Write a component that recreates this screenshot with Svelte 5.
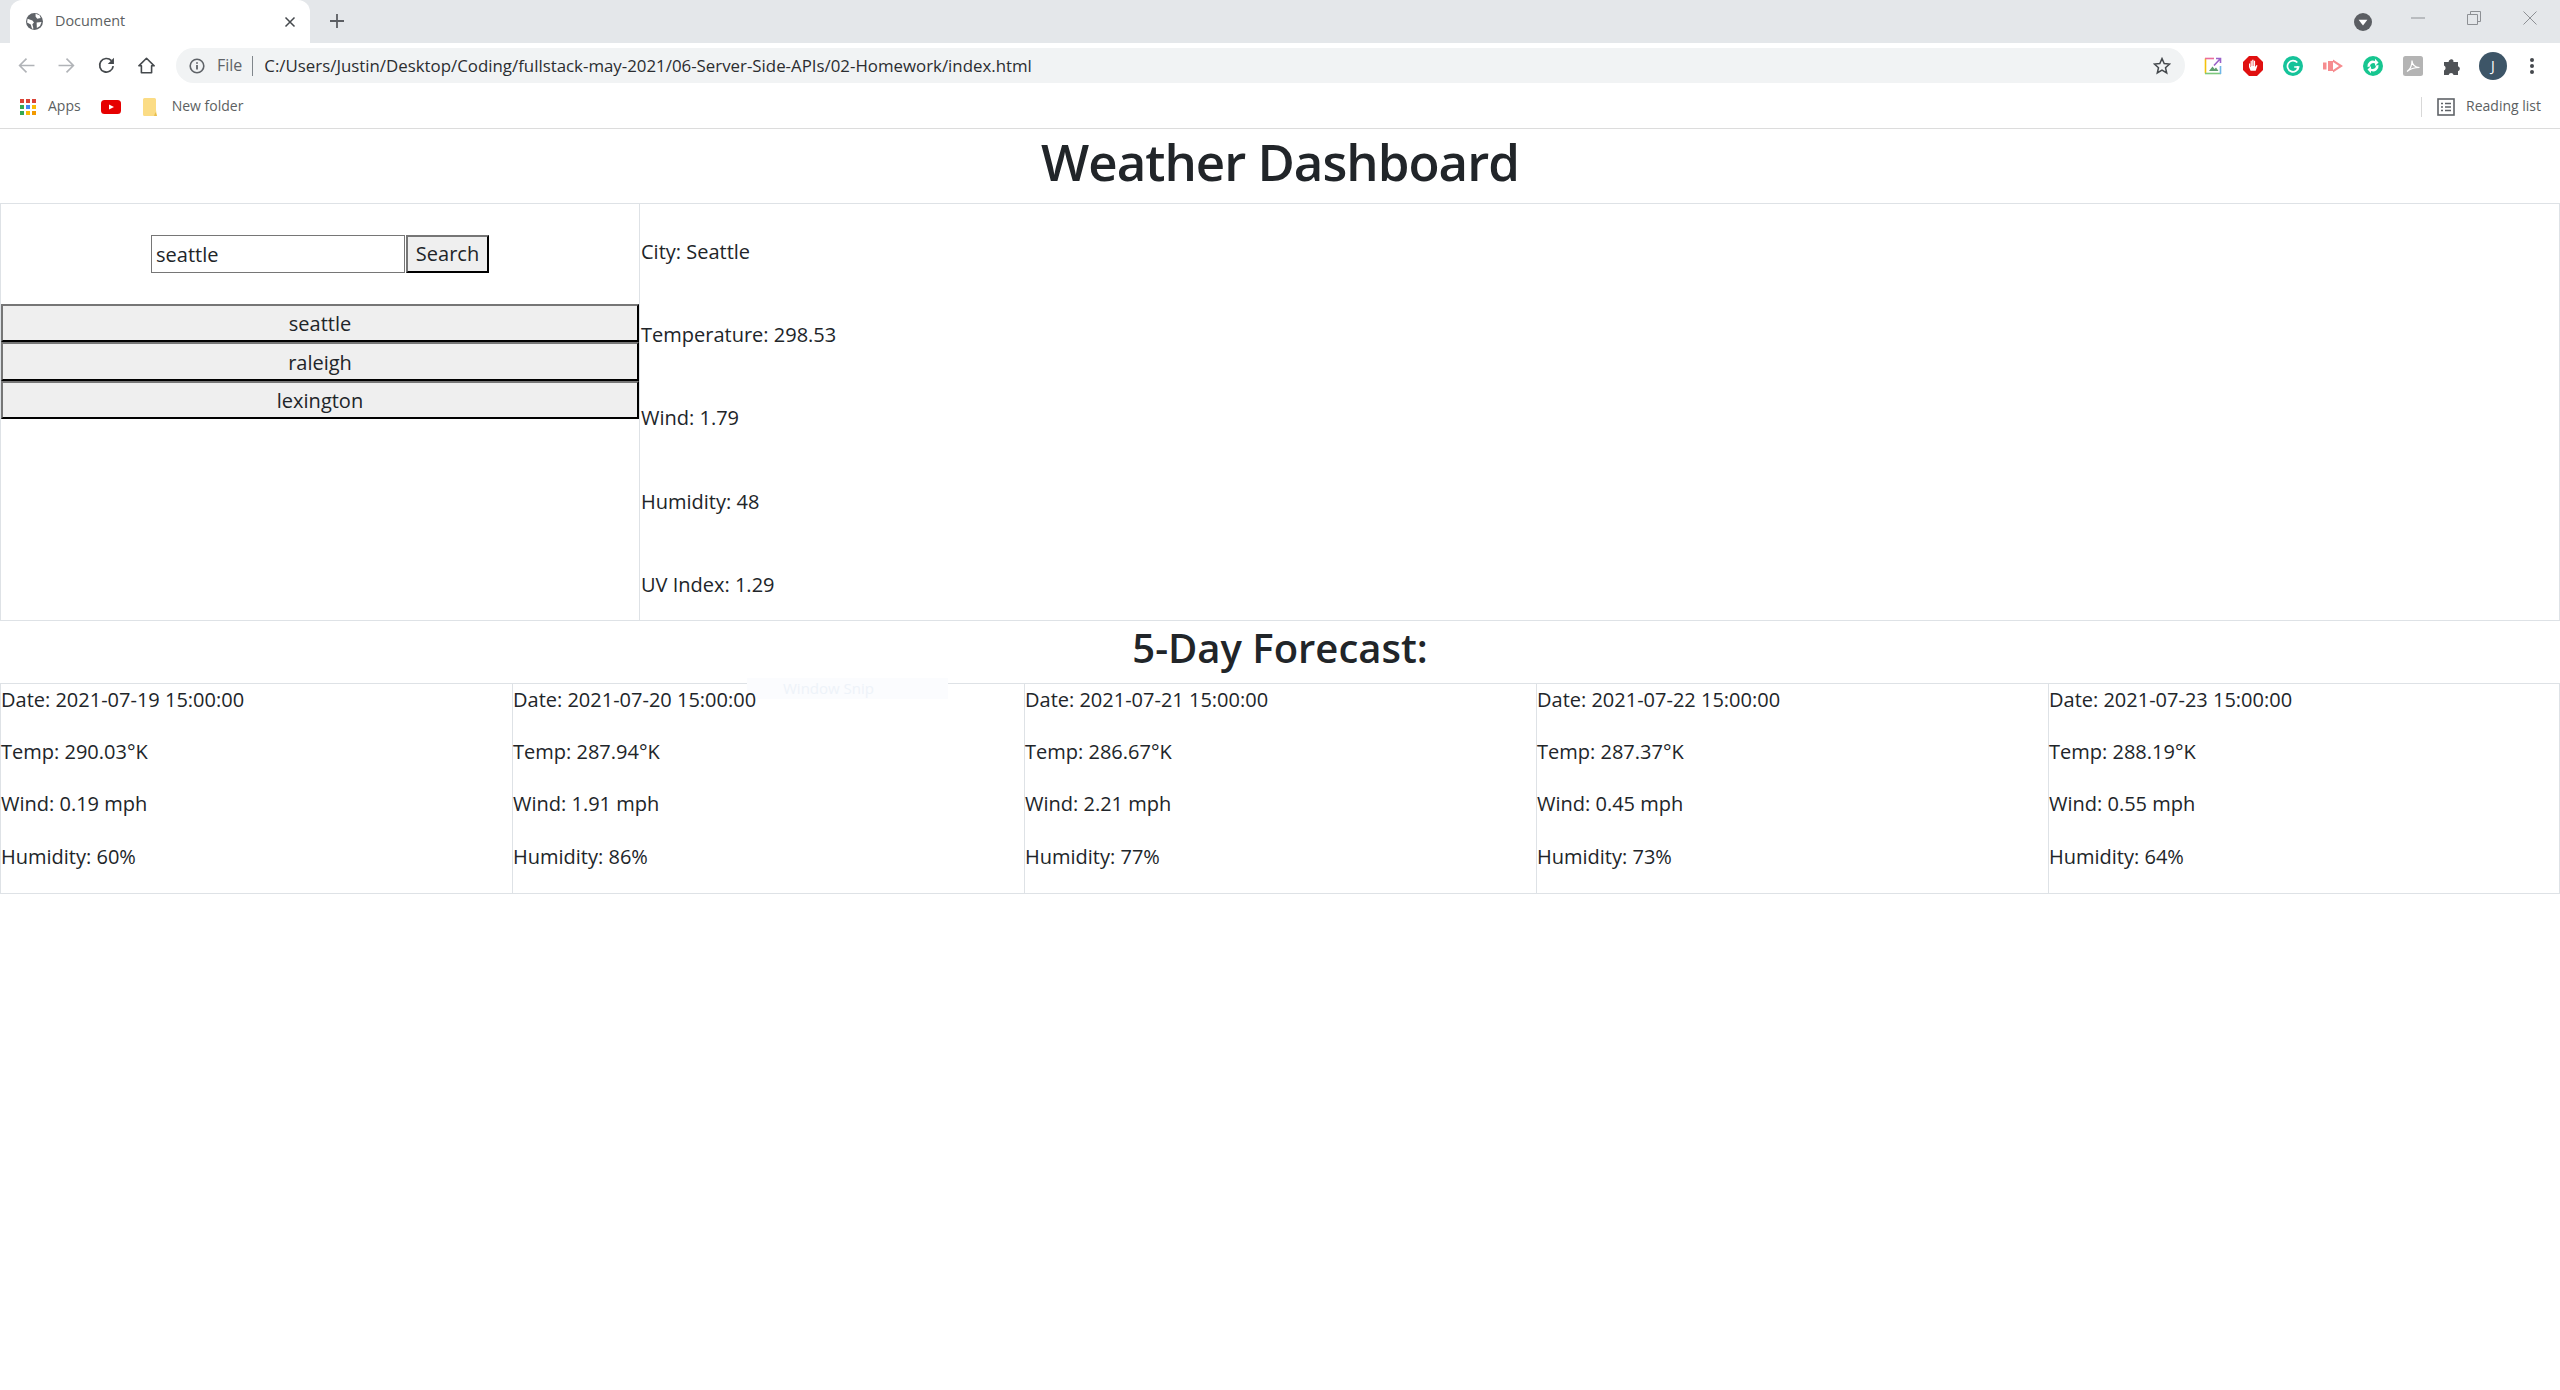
<script>
  const history = ['seattle', 'raleigh', 'lexington'];
  const current = ['City: Seattle', 'Temperature: 298.53', 'Wind: 1.79', 'Humidity: 48', 'UV Index: 1.29'];
  const forecast = [
    { date: '2021-07-19 15:00:00', temp: '290.03', wind: '0.19', humidity: 60 },
    { date: '2021-07-20 15:00:00', temp: '287.94', wind: '1.91', humidity: 86 },
    { date: '2021-07-21 15:00:00', temp: '286.67', wind: '2.21', humidity: 77 },
    { date: '2021-07-22 15:00:00', temp: '287.37', wind: '0.45', humidity: 73 },
    { date: '2021-07-23 15:00:00', temp: '288.19', wind: '0.55', humidity: 64 }
  ];
  const appColors = ['#db4437', '#db4437', '#db4437', '#34a853', '#4285f4', '#fbbc05', '#34a853', '#fbbc05', '#f29900'];
</script>

<div class="browser">
  <div class="tabstrip">
    <div class="tab">
      <svg class="favicon" viewBox="0 0 16 16"><circle cx="8" cy="8" r="8" fill="#5f6368"/><path d="M1.5 5.5L6 7l1.5 2-1.5 1.5 1 4-1.3.4-1.2-4L1 9zM9 .8l3.8 1.4 1 2.4-3.2.8-1.6-2.2zM10 9l4.6-.6-1.4 3.8-3 2z" fill="#fff"/></svg>
      <span class="tab-title">Document</span>
      <svg class="tab-close" viewBox="0 0 12 12"><path d="M1.5 1.5l9 9M10.5 1.5l-9 9" stroke="#45494d" stroke-width="1.5"/></svg>
    </div>
    <svg class="new-tab" viewBox="0 0 14 14"><path d="M7 0v14M0 7h14" stroke="#5b5e63" stroke-width="1.8"/></svg>
    <div class="spacer"></div>
    <div class="tab-search"><svg viewBox="0 0 18 18"><circle cx="9" cy="9" r="9" fill="#5b5e63"/><path d="M4.6 6.8h8.8L9 12.4z" fill="#fff"/></svg></div>
    <div class="win-controls">
      <svg viewBox="0 0 14 14"><path d="M0 7h14" stroke="#8d9094"/></svg>
      <svg viewBox="0 0 14 14"><path d="M.5 3.5h10v10H.5zM3.5 3V.5h10v10H11" fill="none" stroke="#8d9094"/></svg>
      <svg viewBox="0 0 14 14"><path d="M.5.5l13 13M13.5.5l-13 13" stroke="#8d9094"/></svg>
    </div>
  </div>

  <div class="toolbar">
    <svg class="nav dim" viewBox="0 0 16 16"><path d="M15.5 8H1.5M8 1.5L1.5 8 8 14.5" fill="none" stroke="#b0b3b7" stroke-width="1.5"/></svg>
    <svg class="nav dim" viewBox="0 0 16 16"><path d="M.5 8h14M8 1.5L14.5 8 8 14.5" fill="none" stroke="#b0b3b7" stroke-width="1.5"/></svg>
    <svg class="nav" viewBox="0 0 16 16"><path d="M14.3 8.6A6.4 6.4 0 1 1 12.6 3.4" fill="none" stroke="#45494d" stroke-width="1.6"/><path d="M15 .8v5.8H9.2z" fill="#45494d"/></svg>
    <svg class="nav" viewBox="0 0 16 16"><path d="M.8 8.3L8 1.2l7.2 7.1h-2.4v6.5H3.2V8.3z" fill="none" stroke="#45494d" stroke-width="1.5" stroke-linejoin="round"/></svg>
    <div class="omnibox">
      <svg class="info" viewBox="0 0 16 16"><circle cx="8" cy="8" r="6.8" fill="none" stroke="#5f6368" stroke-width="1.6"/><path d="M8 7v4.5M8 4.2v1.6" stroke="#5f6368" stroke-width="1.8"/></svg>
      <span class="scheme">File</span>
      <span class="divider"></span>
      <span class="url">C:/Users/Justin/Desktop/Coding/fullstack-may-2021/06-Server-Side-APIs/02-Homework/index.html</span>
      <div class="spacer"></div>
      <svg class="star" viewBox="0 0 18 18"><path d="M9 1.6l2.2 5 5.4.5-4.1 3.6 1.2 5.3L9 13.2 4.3 16l1.2-5.3L1.4 7.1l5.4-.5z" fill="none" stroke="#45494d" stroke-width="1.5"/></svg>
    </div>
    <div class="extensions">
      <svg viewBox="0 0 20 20"><path d="M2.5 2.5v15" stroke="#f4c20d" stroke-width="1.6"/><path d="M2 2.5h9" stroke="#ea6d9b" stroke-width="1.6"/><path d="M2 17.5h16" stroke="#7dc97d" stroke-width="1.6"/><path d="M17.5 10v8" stroke="#6fb6e8" stroke-width="1.6"/><path d="M11 9.5l6.5-7M13 2.5h4.5V7" fill="none" stroke="#9a62c9" stroke-width="1.6"/><path d="M6 15l3.5-4.5 2 2.5 1.5-1.5 2.5 3.5z" fill="#5e9e6e"/></svg>
      <svg viewBox="0 0 20 20"><path d="M6 0h8l6 6v8l-6 6H6l-6-6V6z" fill="#e01010"/><path d="M6 11V7.5h1.2V11h.4V4.8h1.2V10h.4V3.8h1.3V10h.4V4.8h1.2V11l1.4-2 1 .5-1.8 5.2H7.6z" fill="#fff"/></svg>
      <svg viewBox="0 0 20 20"><circle cx="10" cy="10" r="10" fill="#15c39a"/><path d="M14.3 6.5A5.6 5.6 0 1 0 15.6 11h-4.4" fill="none" stroke="#fff" stroke-width="1.7"/><path d="M14.5 10v3.5" stroke="#fff" stroke-width="1.7"/></svg>
      <svg viewBox="0 0 20 20"><path d="M0 6.5h3.5v7H0z" fill="#f68c8f"/><path d="M5 5h5v10H5z" fill="#f68c8f"/><path d="M10 3.5l10 6.5-10 6.5V14l6-4-6-4z" fill="#f68c8f"/></svg>
      <svg viewBox="0 0 20 20"><circle cx="10" cy="10" r="10" fill="#17c690"/><path d="M4.5 11A5.5 5.5 0 0 1 12 5V2.8l3.5 3.6L12 10V7.6A3.2 3.2 0 0 0 7 10.5zM15.5 9A5.5 5.5 0 0 1 8 15v2.2l-3.5-3.6L8 10v2.4a3.2 3.2 0 0 0 5-2.9z" fill="#fff"/></svg>
      <svg viewBox="0 0 20 20"><rect width="20" height="20" rx="2.5" fill="#b4b4b4"/><path d="M4 15.5c3-2 5-6 5-11 0 4 3 7 7.5 7-4.5 0-9 1-12.5 4z" fill="none" stroke="#fff" stroke-width="1.2"/></svg>
      <svg viewBox="0 0 20 20"><path d="M1 6h4.6a2.6 2.6 0 0 1 4.8-1.5V6H15v4.2a2.6 2.6 0 0 1 0 5V19h-4.4a2.6 2.6 0 0 0-5 0H1v-4.6a2.6 2.6 0 0 0 0-4.8z" fill="#4f5256"/></svg>
    </div>
    <div class="avatar">J</div>
    <svg class="menu" viewBox="0 0 6 18"><circle cx="3" cy="3" r="2" fill="#45494d"/><circle cx="3" cy="9" r="2" fill="#45494d"/><circle cx="3" cy="15" r="2" fill="#45494d"/></svg>
  </div>

  <div class="bookmarks">
    <div class="bookmark">
      <div class="apps">
        {#each appColors as c}<i style="background: {c}"></i>{/each}
      </div>
      <span>Apps</span>
    </div>
    <svg class="yt" viewBox="0 0 20 14"><rect width="20" height="14" rx="3.5" fill="#e60000"/><path d="M8 4.5l5 2.5-5 2.5z" fill="#fff"/></svg>
    <div class="bookmark">
      <svg class="folder" viewBox="0 0 14 18"><path d="M0 1.5Q0 0 1.5 0h10Q13 0 13 1.5V12l1 6H1.5Q0 18 0 16.5z" fill="#fbdc85"/><path d="M11 18l1.5-4 1.5 4z" fill="#e8bf4e"/></svg>
      <span>New folder</span>
    </div>
    <div class="spacer"></div>
    <span class="bar-sep"></span>
    <div class="bookmark reading">
      <svg viewBox="0 0 18 18"><rect x="1" y="1" width="16" height="16" fill="none" stroke="#5f6368" stroke-width="1.6"/><path d="M4 5.5h2M4 9h2M4 12.5h2M8 5.5h6M8 9h6M8 12.5h6" stroke="#5f6368" stroke-width="1.4"/></svg>
      <span>Reading list</span>
    </div>
  </div>
</div>

<main>
  <h1>Weather Dashboard</h1>

  <section class="top">
    <div class="search-col">
      <form class="search-form" onsubmit={(e) => e.preventDefault()}>
        <input type="text" value="seattle" />
        <button type="submit">Search</button>
      </form>
      <div class="history">
        {#each history as city}
          <button type="button">{city}</button>
        {/each}
      </div>
    </div>
    <div class="current">
      {#each current as line}
        <p>{line}</p>
      {/each}
    </div>
  </section>

  <h2>5-Day Forecast:</h2>

  <section class="forecast">
    <span class="ghost">Window Snip</span>
    {#each forecast as day}
      <div class="day">
        <p>Date: {day.date}</p>
        <p>Temp: {day.temp}°K</p>
        <p>Wind: {day.wind} mph</p>
        <p>Humidity: {day.humidity}%</p>
      </div>
    {/each}
  </section>
</main>

<style>
  :global(body) {
    background: #fff;
    font-family: "Open Sans", "Noto Sans", sans-serif;
    color: #212529;
  }

  .spacer { flex: 1; }

  .tabstrip {
    height: 43px;
    background: #e4e7ea;
    display: flex;
    align-items: flex-end;
  }
  .tab {
    width: 300px;
    height: 43px;
    margin-left: 10px;
    background: #fff;
    border-radius: 12px 12px 0 0;
    display: flex;
    align-items: center;
    box-sizing: border-box;
    padding: 0 14px 0 16px;
  }
  .favicon { width: 17px; height: 17px; }
  .tab-title {
    margin-left: 12px;
    flex: 1;
    font-size: 14.4px;
    color: #5c5f62;
    padding-bottom: 2px;
  }
  .tab-close { width: 12px; height: 12px; }
  .new-tab { width: 14px; height: 14px; margin: 0 0 15px 20px; }
  .tab-search { width: 18px; height: 18px; margin-bottom: 12px; }
  .tab-search svg { display: block; }
  .win-controls {
    display: flex;
    align-items: center;
    gap: 42px;
    margin: 0 23px 18px 39px;
    height: 14px;
  }
  .win-controls svg { width: 14px; height: 14px; }

  .toolbar {
    height: 43px;
    background: #fff;
    display: flex;
    align-items: center;
  }
  .nav { width: 17px; height: 17px; margin: 2px 0 0 23px; flex: none; }
  .nav.dim:first-child { margin-left: 18px; }
  .omnibox {
    width: 2009px;
    height: 35px;
    margin: 2px 0 0 21px;
    background: #f1f3f4;
    border-radius: 18px;
    display: flex;
    align-items: center;
    box-sizing: border-box;
    padding: 0 14px 0 13px;
    flex: none;
  }
  .info { width: 16px; height: 16px; flex: none; }
  .scheme { margin-left: 12px; font-size: 16px; color: #5f6368; padding-bottom: 2px; }
  .divider { width: 1px; height: 20px; background: #80868b; margin: 0 11px 0 10px; }
  .url { font-size: 16.85px; color: #2b2d30; white-space: nowrap; padding-bottom: 1px; }
  .star { width: 18px; height: 18px; }
  .extensions {
    display: flex;
    align-items: center;
    gap: 20px;
    margin: 2px 0 0 18px;
  }
  .extensions svg { width: 20px; height: 20px; display: block; }
  .avatar {
    width: 28px;
    height: 28px;
    margin: 2px 0 0 16px;
    border-radius: 50%;
    background: #3d5567;
    color: #fff;
    font-size: 14px;
    display: flex;
    align-items: center;
    justify-content: center;
  }
  .menu { width: 6px; height: 18px; margin: 2px 0 0 22px; }

  .bookmarks {
    height: 42px;
    background: #fff;
    border-bottom: 1px solid #dcdcdc;
    display: flex;
    align-items: center;
    padding: 0 19px 0 20px;
    font-size: 14px;
    color: #5c5f62;
  }
  .bookmark { display: flex; align-items: center; }
  .bookmark span { padding-bottom: 3px; }
  .apps {
    display: grid;
    grid-template-columns: repeat(3, 4px);
    gap: 2px;
    margin-right: 12px;
  }
  .apps i { width: 4px; height: 4px; display: block; }
  .yt { width: 20px; height: 14px; margin: 0 22px 0 20px; }
  .folder { width: 14px; height: 18px; margin-right: 15px; }
  .bar-sep { width: 1px; height: 20px; background: #d8d8d8; margin-right: 15px; }
  .reading svg { width: 18px; height: 18px; margin-right: 11px; }

  main {
    font-size: 20px;
    line-height: 31.5px;
  }
  h1 {
    margin: 0;
    height: 74px;
    font-size: 51px;
    letter-spacing: -1px;
    line-height: 65px;
    font-weight: 600;
    text-align: center;
  }
  .top {
    display: flex;
    height: 418px;
    box-sizing: border-box;
    border: 1px solid #dee2e6;
  }
  .search-col {
    width: 639px;
    flex: none;
    box-sizing: border-box;
    border-right: 1px solid #dee2e6;
    padding: 31px 0 0 0;
  }
  .search-form {
    display: flex;
    justify-content: center;
    margin-bottom: 31px;
  }
  input {
    width: 254px;
    height: 38px;
    box-sizing: border-box;
    padding: 0 4px;
    border: 1px solid #767676;
    font: inherit;
    color: #212529;
    outline: none;
    margin-right: 1px;
  }
  button {
    font: inherit;
    color: #212529;
    background: #efefef;
    border-width: 2px;
    border-style: outset;
    border-color: #767676 #212529 #212529 #767676;
    box-sizing: border-box;
    padding: 0;
  }
  .search-form button {
    width: 83px;
    height: 38px;
  }
  .history { display: flex; flex-direction: column; }
  .history button { height: 38.4px; width: 100%; padding-top: 2px; }
  .current {
    display: flex;
    flex-direction: column;
    gap: 51.7px;
    padding: 32px 0 0 1px;
  }
  p { margin: 0; }
  h2 {
    margin: 0;
    height: 62px;
    font-size: 40px;
    line-height: 53px;
    font-weight: 600;
    text-align: center;
  }
  .forecast {
    display: grid;
    grid-template-columns: repeat(5, 1fr);
    position: relative;
  }
  .day {
    height: 211px;
    box-sizing: border-box;
    border: 1px solid #dee2e6;
    border-width: 1px 0 1px 1px;
    display: flex;
    flex-direction: column;
    gap: 20.7px;
  }
  .day p { position: relative; }
  .day:last-of-type { border-right: 1px solid #dee2e6; }
  .ghost {
    position: absolute;
    left: 747px;
    top: -5px;
    width: 201px;
    height: 21px;
    padding-left: 36px;
    box-sizing: border-box;
    font-size: 15px;
    line-height: 21px;
    color: #eef3f9;
    background: #fbfcfe;
    pointer-events: none;
  }
</style>
